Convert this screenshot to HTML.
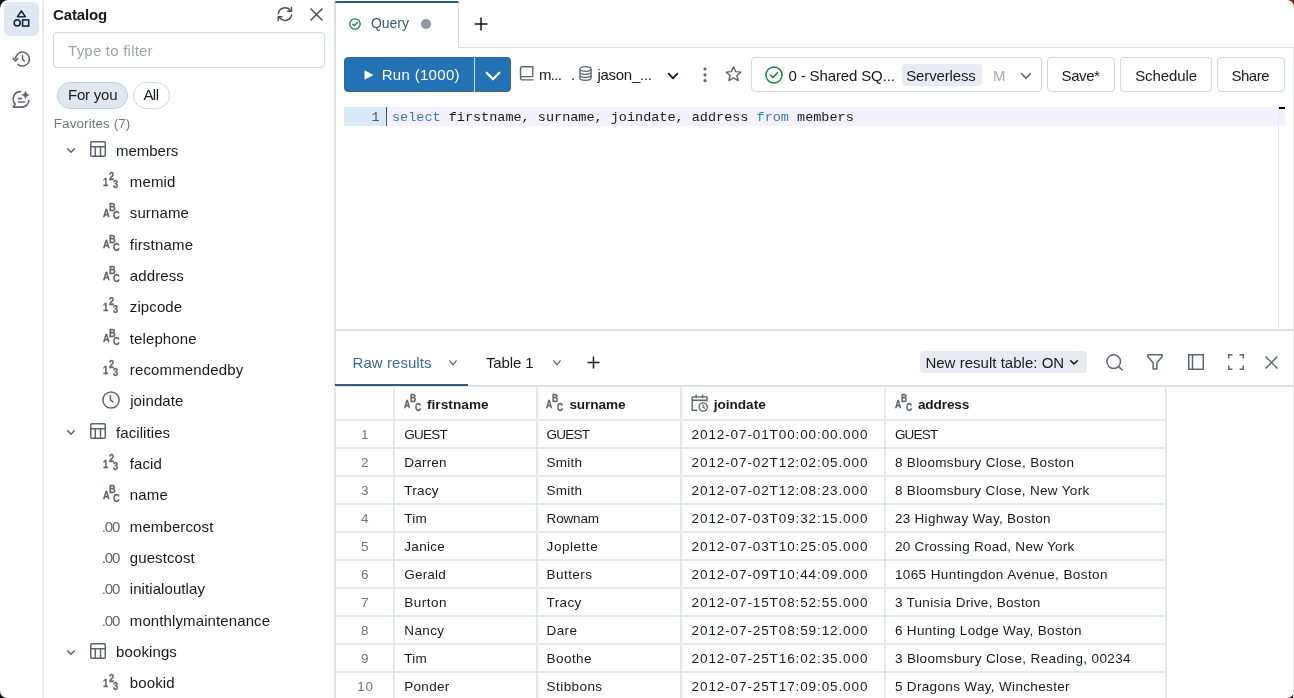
<!DOCTYPE html>
<html><head><meta charset="utf-8">
<style>
*{box-sizing:border-box;margin:0;padding:0}
html,body{width:1294px;height:698px;overflow:hidden;background:#fff;font-family:"Liberation Sans",sans-serif;color:#161b20}
.a{position:absolute}
.t{position:absolute;white-space:nowrap;line-height:1}
body{will-change:transform}
svg{position:absolute;overflow:visible}
</style></head><body>

<div class="a" style="left:42px;top:0;width:2px;height:698px;background:#e7e8eb"></div>
<div class="a" style="left:4px;top:2px;width:35px;height:34px;border-radius:6px;background:#dde8f3"></div>
<svg style="left:13px;top:10px" width="18" height="18" viewBox="0 0 18 18"><path d="M8.4 0.9 L12.3 6.7 H4.5 Z" fill="none" stroke="#0e2a44" stroke-width="1.6" stroke-linejoin="round"/>
<circle cx="4.2" cy="12.9" r="3" fill="none" stroke="#0e2a44" stroke-width="1.6"/>
<rect x="9.6" y="9.9" width="6.1" height="6.1" fill="none" stroke="#0e2a44" stroke-width="1.6"/></svg>
<svg style="left:12px;top:48px" width="22" height="22" viewBox="0 0 22 22"><path d="M5.9 16.4 A7 7 0 1 0 3.5 10.4" fill="none" stroke="#5d666e" stroke-width="1.5" stroke-linecap="round"/>
<path d="M1.2 10.3 L3.4 13 L5.7 10.5" fill="none" stroke="#5d666e" stroke-width="1.6" stroke-linecap="round" stroke-linejoin="round"/>
<path d="M10.5 7.2 V11.4 L12.4 13" fill="none" stroke="#5d666e" stroke-width="1.5" stroke-linecap="round" stroke-linejoin="round"/></svg>
<svg style="left:10px;top:88px" width="24" height="22" viewBox="0 0 24 22"><path d="M10.4 3.6 A7.3 7.3 0 0 0 5.3 16 L3.3 19.1 H11.8 A7.2 7.2 0 0 0 18.9 12.3" fill="none" stroke="#5d666e" stroke-width="1.6" stroke-linecap="round" stroke-linejoin="round"/>
<path d="M8.3 10.6 H11.5 M8.3 14 H14.5" fill="none" stroke="#5d666e" stroke-width="1.6" stroke-linecap="round"/>
<path d="M15.5 3.1 Q16.1 6.4 19.2 7.0 Q16.1 7.6 15.5 10.8 Q14.9 7.6 11.8 7.0 Q14.9 6.4 15.5 3.1 Z" fill="#5d666e" stroke="#5d666e" stroke-width="0.5" stroke-linejoin="round"/></svg>
<svg style="left:0px;top:0px" width="9" height="9" viewBox="0 0 9 9"><path d="M0 0 H8.5 A8.5 8.5 0 0 0 0 8.5 Z" fill="#111"/></svg>
<svg style="left:1286px;top:0px" width="8" height="8" viewBox="0 0 8 8"><path d="M8 0 V7 A7 7 0 0 0 1 0 Z" fill="#7a2424"/></svg>
<svg style="left:0px;top:690px" width="8" height="8" viewBox="0 0 8 8"><path d="M0 8 H7 A7 7 0 0 1 0 1 Z" fill="#111"/></svg>
<svg style="left:1286px;top:690px" width="8" height="8" viewBox="0 0 8 8"><path d="M8 8 V1 A7 7 0 0 1 1 8 Z" fill="#3a1a1a"/></svg>
<div class="t" style="left:53.1px;top:7px;font-size:15px;color:#161b20;font-family:'Liberation Sans',sans-serif;font-weight:bold;letter-spacing:-0.146px">Catalog</div>
<svg style="left:277px;top:6px" width="16" height="16" viewBox="0 0 16 16"><path d="M1.3 7.6 A6.8 6.8 0 0 1 13.6 4.6" fill="none" stroke="#4a5258" stroke-width="1.5" stroke-linecap="round"/>
<path d="M14.6 9 A6.8 6.8 0 0 1 2.6 11.8" fill="none" stroke="#4a5258" stroke-width="1.5" stroke-linecap="round"/>
<path d="M14.5 1.6 V5.3 H10.8" fill="none" stroke="#4a5258" stroke-width="1.5" stroke-linecap="round" stroke-linejoin="round"/>
<path d="M1.3 14.4 V10.7 H5" fill="none" stroke="#4a5258" stroke-width="1.5" stroke-linecap="round" stroke-linejoin="round"/></svg>
<svg style="left:310px;top:8px" width="13" height="13" viewBox="0 0 13 13"><path d="M0.5 0.5 L12.5 12.5 M12.5 0.5 L0.5 12.5" fill="none" stroke="#4a5258" stroke-width="1.5"/></svg>
<div class="a" style="left:53px;top:32px;width:272px;height:36px;border:1px solid #d3d9df;border-radius:4px"></div>
<div class="t" style="left:68.1px;top:43px;font-size:15px;color:#9aa4ad;font-family:'Liberation Sans',sans-serif;letter-spacing:0.217px">Type to filter</div>
<div class="a" style="left:57px;top:82px;width:71px;height:26.5px;border:1px solid #bfcdda;border-radius:14px;background:#dfe8f1"></div>
<div class="t" style="left:68.0px;top:87px;font-size:15px;color:#161b20;font-family:'Liberation Sans',sans-serif;letter-spacing:-0.225px">For you</div>
<div class="a" style="left:133px;top:82px;width:37px;height:26.5px;border:1px solid #d3d9df;border-radius:14px"></div>
<div class="t" style="left:143.4px;top:87px;font-size:15px;color:#161b20;font-family:'Liberation Sans',sans-serif;letter-spacing:-0.525px">All</div>
<div class="t" style="left:53.8px;top:117px;font-size:13.5px;color:#6f7a84;font-family:'Liberation Sans',sans-serif;letter-spacing:0.066px">Favorites (7)</div>
<svg style="left:66.5px;top:147.9px" width="8" height="5" viewBox="0 0 8 5"><path d="M0.7 0.7 L4.0 4.3 L7.3 0.7" fill="none" stroke="#5d666e" stroke-width="1.5" stroke-linecap="round" stroke-linejoin="round"/></svg>
<svg style="left:90px;top:141.1px" width="16" height="16" viewBox="0 0 16 16"><rect x="0.75" y="0.75" width="14.5" height="14.5" rx="1" fill="none" stroke="#5d666e" stroke-width="1.5"/>
<path d="M0.75 5.7 H15.25 M5.3 5.7 V15.25 M10.5 5.7 V15.25" fill="none" stroke="#5d666e" stroke-width="1.5"/></svg>
<div class="t" style="left:116.1px;top:143px;font-size:15px;color:#161b20;font-family:'Liberation Sans',sans-serif;letter-spacing:-0.042px">members</div>
<div class="t" style="left:102.9px;top:177px;font-size:10.8px;color:#5d666e;font-family:'Liberation Sans',sans-serif;font-weight:bold;-webkit-text-stroke:0.3px #5d666e;transform:scaleX(0.86);transform-origin:0 0">1</div>
<div class="t" style="left:108.6px;top:171px;font-size:10.8px;color:#5d666e;font-family:'Liberation Sans',sans-serif;font-weight:bold;-webkit-text-stroke:0.3px #5d666e;transform:scaleX(0.86);transform-origin:0 0">2</div>
<div class="t" style="left:113.4px;top:179px;font-size:10.8px;color:#5d666e;font-family:'Liberation Sans',sans-serif;font-weight:bold;-webkit-text-stroke:0.3px #5d666e;transform:scaleX(0.86);transform-origin:0 0">3</div>
<div class="t" style="left:129.8px;top:174px;font-size:15px;color:#161b20;font-family:'Liberation Sans',sans-serif;letter-spacing:0.135px">memid</div>
<div class="t" style="left:102.6px;top:208px;font-size:10.8px;color:#5d666e;font-family:'Liberation Sans',sans-serif;font-weight:bold;-webkit-text-stroke:0.3px #5d666e;transform:scaleX(0.86);transform-origin:0 0">A</div>
<div class="t" style="left:108.6px;top:202px;font-size:10.8px;color:#5d666e;font-family:'Liberation Sans',sans-serif;font-weight:bold;-webkit-text-stroke:0.3px #5d666e;transform:scaleX(0.86);transform-origin:0 0">B</div>
<div class="t" style="left:113.4px;top:210px;font-size:10.8px;color:#5d666e;font-family:'Liberation Sans',sans-serif;font-weight:bold;-webkit-text-stroke:0.3px #5d666e;transform:scaleX(0.86);transform-origin:0 0">C</div>
<div class="t" style="left:129.8px;top:205px;font-size:15px;color:#161b20;font-family:'Liberation Sans',sans-serif;letter-spacing:0.117px">surname</div>
<div class="t" style="left:102.6px;top:239px;font-size:10.8px;color:#5d666e;font-family:'Liberation Sans',sans-serif;font-weight:bold;-webkit-text-stroke:0.3px #5d666e;transform:scaleX(0.86);transform-origin:0 0">A</div>
<div class="t" style="left:108.6px;top:234px;font-size:10.8px;color:#5d666e;font-family:'Liberation Sans',sans-serif;font-weight:bold;-webkit-text-stroke:0.3px #5d666e;transform:scaleX(0.86);transform-origin:0 0">B</div>
<div class="t" style="left:113.4px;top:242px;font-size:10.8px;color:#5d666e;font-family:'Liberation Sans',sans-serif;font-weight:bold;-webkit-text-stroke:0.3px #5d666e;transform:scaleX(0.86);transform-origin:0 0">C</div>
<div class="t" style="left:129.8px;top:237px;font-size:15px;color:#161b20;font-family:'Liberation Sans',sans-serif;letter-spacing:0.194px">firstname</div>
<div class="t" style="left:102.6px;top:271px;font-size:10.8px;color:#5d666e;font-family:'Liberation Sans',sans-serif;font-weight:bold;-webkit-text-stroke:0.3px #5d666e;transform:scaleX(0.86);transform-origin:0 0">A</div>
<div class="t" style="left:108.6px;top:265px;font-size:10.8px;color:#5d666e;font-family:'Liberation Sans',sans-serif;font-weight:bold;-webkit-text-stroke:0.3px #5d666e;transform:scaleX(0.86);transform-origin:0 0">B</div>
<div class="t" style="left:113.4px;top:273px;font-size:10.8px;color:#5d666e;font-family:'Liberation Sans',sans-serif;font-weight:bold;-webkit-text-stroke:0.3px #5d666e;transform:scaleX(0.86);transform-origin:0 0">C</div>
<div class="t" style="left:129.8px;top:268px;font-size:15px;color:#161b20;font-family:'Liberation Sans',sans-serif;letter-spacing:0.107px">address</div>
<div class="t" style="left:102.9px;top:302px;font-size:10.8px;color:#5d666e;font-family:'Liberation Sans',sans-serif;font-weight:bold;-webkit-text-stroke:0.3px #5d666e;transform:scaleX(0.86);transform-origin:0 0">1</div>
<div class="t" style="left:108.6px;top:296px;font-size:10.8px;color:#5d666e;font-family:'Liberation Sans',sans-serif;font-weight:bold;-webkit-text-stroke:0.3px #5d666e;transform:scaleX(0.86);transform-origin:0 0">2</div>
<div class="t" style="left:113.4px;top:304px;font-size:10.8px;color:#5d666e;font-family:'Liberation Sans',sans-serif;font-weight:bold;-webkit-text-stroke:0.3px #5d666e;transform:scaleX(0.86);transform-origin:0 0">3</div>
<div class="t" style="left:129.8px;top:299px;font-size:15px;color:#161b20;font-family:'Liberation Sans',sans-serif;letter-spacing:0.103px">zipcode</div>
<div class="t" style="left:102.6px;top:333px;font-size:10.8px;color:#5d666e;font-family:'Liberation Sans',sans-serif;font-weight:bold;-webkit-text-stroke:0.3px #5d666e;transform:scaleX(0.86);transform-origin:0 0">A</div>
<div class="t" style="left:108.6px;top:328px;font-size:10.8px;color:#5d666e;font-family:'Liberation Sans',sans-serif;font-weight:bold;-webkit-text-stroke:0.3px #5d666e;transform:scaleX(0.86);transform-origin:0 0">B</div>
<div class="t" style="left:113.4px;top:336px;font-size:10.8px;color:#5d666e;font-family:'Liberation Sans',sans-serif;font-weight:bold;-webkit-text-stroke:0.3px #5d666e;transform:scaleX(0.86);transform-origin:0 0">C</div>
<div class="t" style="left:129.8px;top:331px;font-size:15px;color:#161b20;font-family:'Liberation Sans',sans-serif;letter-spacing:0.099px">telephone</div>
<div class="t" style="left:102.9px;top:365px;font-size:10.8px;color:#5d666e;font-family:'Liberation Sans',sans-serif;font-weight:bold;-webkit-text-stroke:0.3px #5d666e;transform:scaleX(0.86);transform-origin:0 0">1</div>
<div class="t" style="left:108.6px;top:359px;font-size:10.8px;color:#5d666e;font-family:'Liberation Sans',sans-serif;font-weight:bold;-webkit-text-stroke:0.3px #5d666e;transform:scaleX(0.86);transform-origin:0 0">2</div>
<div class="t" style="left:113.4px;top:367px;font-size:10.8px;color:#5d666e;font-family:'Liberation Sans',sans-serif;font-weight:bold;-webkit-text-stroke:0.3px #5d666e;transform:scaleX(0.86);transform-origin:0 0">3</div>
<div class="t" style="left:129.8px;top:362px;font-size:15px;color:#161b20;font-family:'Liberation Sans',sans-serif;letter-spacing:0.138px">recommendedby</div>
<svg style="left:102.1px;top:390.8px" width="18" height="18" viewBox="0 0 18 18"><circle cx="9" cy="9" r="8.1" fill="none" stroke="#5d666e" stroke-width="1.5"/>
<path d="M8.4 4.6 V8.9 L10.9 10.9" fill="none" stroke="#5d666e" stroke-width="1.5" stroke-linecap="round" stroke-linejoin="round"/></svg>
<div class="t" style="left:130.18px;top:393px;font-size:15px;color:#161b20;font-family:'Liberation Sans',sans-serif;letter-spacing:0.091px">joindate</div>
<svg style="left:66.5px;top:430.1px" width="8" height="5" viewBox="0 0 8 5"><path d="M0.7 0.7 L4.0 4.3 L7.3 0.7" fill="none" stroke="#5d666e" stroke-width="1.5" stroke-linecap="round" stroke-linejoin="round"/></svg>
<svg style="left:90px;top:423.3px" width="16" height="16" viewBox="0 0 16 16"><rect x="0.75" y="0.75" width="14.5" height="14.5" rx="1" fill="none" stroke="#5d666e" stroke-width="1.5"/>
<path d="M0.75 5.7 H15.25 M5.3 5.7 V15.25 M10.5 5.7 V15.25" fill="none" stroke="#5d666e" stroke-width="1.5"/></svg>
<div class="t" style="left:116.1px;top:425px;font-size:15px;color:#161b20;font-family:'Liberation Sans',sans-serif;letter-spacing:0.071px">facilities</div>
<div class="t" style="left:102.9px;top:459px;font-size:10.8px;color:#5d666e;font-family:'Liberation Sans',sans-serif;font-weight:bold;-webkit-text-stroke:0.3px #5d666e;transform:scaleX(0.86);transform-origin:0 0">1</div>
<div class="t" style="left:108.6px;top:453px;font-size:10.8px;color:#5d666e;font-family:'Liberation Sans',sans-serif;font-weight:bold;-webkit-text-stroke:0.3px #5d666e;transform:scaleX(0.86);transform-origin:0 0">2</div>
<div class="t" style="left:113.4px;top:461px;font-size:10.8px;color:#5d666e;font-family:'Liberation Sans',sans-serif;font-weight:bold;-webkit-text-stroke:0.3px #5d666e;transform:scaleX(0.86);transform-origin:0 0">3</div>
<div class="t" style="left:129.8px;top:456px;font-size:15px;color:#161b20;font-family:'Liberation Sans',sans-serif;letter-spacing:0.095px">facid</div>
<div class="t" style="left:102.6px;top:490px;font-size:10.8px;color:#5d666e;font-family:'Liberation Sans',sans-serif;font-weight:bold;-webkit-text-stroke:0.3px #5d666e;transform:scaleX(0.86);transform-origin:0 0">A</div>
<div class="t" style="left:108.6px;top:484px;font-size:10.8px;color:#5d666e;font-family:'Liberation Sans',sans-serif;font-weight:bold;-webkit-text-stroke:0.3px #5d666e;transform:scaleX(0.86);transform-origin:0 0">B</div>
<div class="t" style="left:113.4px;top:493px;font-size:10.8px;color:#5d666e;font-family:'Liberation Sans',sans-serif;font-weight:bold;-webkit-text-stroke:0.3px #5d666e;transform:scaleX(0.86);transform-origin:0 0">C</div>
<div class="t" style="left:129.8px;top:487px;font-size:15px;color:#161b20;font-family:'Liberation Sans',sans-serif;letter-spacing:0.150px">name</div>
<div class="t" style="left:101.8px;top:519px;font-size:15px;color:#5d666e;font-family:'Liberation Sans',sans-serif;letter-spacing:-1.125px">.00</div>
<div class="t" style="left:129.8px;top:519px;font-size:15px;color:#161b20;font-family:'Liberation Sans',sans-serif;letter-spacing:0.110px">membercost</div>
<div class="t" style="left:101.8px;top:550px;font-size:15px;color:#5d666e;font-family:'Liberation Sans',sans-serif;letter-spacing:-1.125px">.00</div>
<div class="t" style="left:129.8px;top:550px;font-size:15px;color:#161b20;font-family:'Liberation Sans',sans-serif;letter-spacing:0.096px">guestcost</div>
<div class="t" style="left:101.8px;top:581px;font-size:15px;color:#5d666e;font-family:'Liberation Sans',sans-serif;letter-spacing:-1.125px">.00</div>
<div class="t" style="left:129.8px;top:581px;font-size:15px;color:#161b20;font-family:'Liberation Sans',sans-serif;letter-spacing:0.074px">initialoutlay</div>
<div class="t" style="left:101.8px;top:613px;font-size:15px;color:#5d666e;font-family:'Liberation Sans',sans-serif;letter-spacing:-1.125px">.00</div>
<div class="t" style="left:129.8px;top:613px;font-size:15px;color:#161b20;font-family:'Liberation Sans',sans-serif;letter-spacing:0.109px">monthlymaintenance</div>
<svg style="left:66.5px;top:649.5px" width="8" height="5" viewBox="0 0 8 5"><path d="M0.7 0.7 L4.0 4.3 L7.3 0.7" fill="none" stroke="#5d666e" stroke-width="1.5" stroke-linecap="round" stroke-linejoin="round"/></svg>
<svg style="left:90px;top:642.7px" width="16" height="16" viewBox="0 0 16 16"><rect x="0.75" y="0.75" width="14.5" height="14.5" rx="1" fill="none" stroke="#5d666e" stroke-width="1.5"/>
<path d="M0.75 5.7 H15.25 M5.3 5.7 V15.25 M10.5 5.7 V15.25" fill="none" stroke="#5d666e" stroke-width="1.5"/></svg>
<div class="t" style="left:116.1px;top:644px;font-size:15px;color:#161b20;font-family:'Liberation Sans',sans-serif;letter-spacing:0.103px">bookings</div>
<div class="t" style="left:102.9px;top:678px;font-size:10.8px;color:#5d666e;font-family:'Liberation Sans',sans-serif;font-weight:bold;-webkit-text-stroke:0.3px #5d666e;transform:scaleX(0.86);transform-origin:0 0">1</div>
<div class="t" style="left:108.6px;top:673px;font-size:10.8px;color:#5d666e;font-family:'Liberation Sans',sans-serif;font-weight:bold;-webkit-text-stroke:0.3px #5d666e;transform:scaleX(0.86);transform-origin:0 0">2</div>
<div class="t" style="left:113.4px;top:681px;font-size:10.8px;color:#5d666e;font-family:'Liberation Sans',sans-serif;font-weight:bold;-webkit-text-stroke:0.3px #5d666e;transform:scaleX(0.86);transform-origin:0 0">3</div>
<div class="t" style="left:129.8px;top:675px;font-size:15px;color:#161b20;font-family:'Liberation Sans',sans-serif;letter-spacing:0.106px">bookid</div>
<div class="a" style="left:334px;top:0;width:2px;height:698px;background:#e2e5e8"></div>
<div class="a" style="left:458px;top:47px;width:836px;height:1px;background:#d9dde1"></div>
<div class="a" style="left:335px;top:1px;width:124px;height:47px;border:1px solid #d9dde1;border-bottom:none;border-radius:5px 5px 0 0;background:#fff"></div>
<div class="a" style="left:335px;top:1px;width:124px;height:2px;background:#2a5a86;border-radius:5px 5px 0 0"></div>
<svg style="left:349px;top:18px" width="12" height="12" viewBox="0 0 12 12"><circle cx="6" cy="6" r="5.2" fill="none" stroke="#277c43" stroke-width="1.3"/>
<path d="M3.6 6.2 L5.3 7.8 L8.4 4.5" fill="none" stroke="#277c43" stroke-width="1.3" stroke-linecap="round" stroke-linejoin="round"/></svg>
<div class="t" style="left:371.0px;top:16px;font-size:14px;color:#3c5a74;font-family:'Liberation Sans',sans-serif;letter-spacing:-0.038px">Query</div>
<div class="a" style="left:421px;top:19px;width:10px;height:10px;border-radius:5px;background:#8d979f"></div>
<svg style="left:474px;top:17px" width="14" height="14" viewBox="0 0 14 14"><path d="M7 0.5 V13.5 M0.5 7 H13.5" fill="none" stroke="#161b20" stroke-width="1.5"/></svg>
<div class="a" style="left:344px;top:57px;width:167px;height:35px;border-radius:4px;background:#2272b4;border:1px solid #3d6583"></div>
<div class="a" style="left:474px;top:57px;width:1px;height:35px;background:#cfe0ee"></div>
<svg style="left:364px;top:70px" width="10" height="10" viewBox="0 0 10 10"><path d="M0.5 0.3 L9.6 5 L0.5 9.7 Z" fill="#fff"/></svg>
<div class="t" style="left:381.7px;top:67px;font-size:15px;color:#fff;font-family:'Liberation Sans',sans-serif;letter-spacing:0.314px">Run (1000)</div>
<svg style="left:486px;top:72px" width="14" height="8" viewBox="0 0 14 8"><path d="M0.7 0.7 L7.0 7.3 L13.3 0.7" fill="none" stroke="#fff" stroke-width="2.2" stroke-linecap="round" stroke-linejoin="round"/></svg>
<svg style="left:519px;top:66px" width="16" height="15" viewBox="0 0 16 15"><path d="M1.5 12 V2.3 A1.6 1.6 0 0 1 3.1 0.7 H13.8 V10.6 H3 A1.6 1.6 0 0 0 1.5 12 A1.7 1.7 0 0 0 3.2 13.9 H14.5" fill="none" stroke="#5d666e" stroke-width="1.4" stroke-linejoin="round"/></svg>
<div class="t" style="left:539.0px;top:67px;font-size:15px;color:#161b20;font-family:'Liberation Sans',sans-serif;letter-spacing:-0.658px">m...</div>
<div class="t" style="left:571.0px;top:67px;font-size:15px;color:#161b20;font-family:'Liberation Sans',sans-serif">.</div>
<svg style="left:579px;top:65.5px" width="13" height="15" viewBox="0 0 13 15"><ellipse cx="6.5" cy="3" rx="5.6" ry="2.3" fill="none" stroke="#5d666e" stroke-width="1.3"/>
<path d="M0.9 3 V12 A5.6 2.3 0 0 0 12.1 12 V3 M0.9 6 A5.6 2.3 0 0 0 12.1 6 M0.9 9 A5.6 2.3 0 0 0 12.1 9" fill="none" stroke="#5d666e" stroke-width="1.3"/></svg>
<div class="t" style="left:597.38px;top:67px;font-size:15px;color:#161b20;font-family:'Liberation Sans',sans-serif;letter-spacing:-0.259px">jason_...</div>
<svg style="left:668px;top:72.5px" width="10" height="6" viewBox="0 0 10 6"><path d="M0.7 0.7 L5.0 5.3 L9.3 0.7" fill="none" stroke="#161b20" stroke-width="1.8" stroke-linecap="round" stroke-linejoin="round"/></svg>
<svg style="left:702px;top:67px" width="6" height="16" viewBox="0 0 6 16"><circle cx="3" cy="2" r="1.6" fill="#5d666e"/><circle cx="3" cy="7.8" r="1.6" fill="#5d666e"/><circle cx="3" cy="13.6" r="1.6" fill="#5d666e"/></svg>
<svg style="left:725px;top:66px" width="17" height="16" viewBox="0 0 17 16"><path d="M8.5 0.9 L10.7 5.6 L15.8 6.1 L11.9 9.5 L13.1 14.6 L8.5 11.9 L3.9 14.6 L5.1 9.5 L1.2 6.1 L6.3 5.6 Z" fill="none" stroke="#5d666e" stroke-width="1.4" stroke-linejoin="round"/></svg>
<div class="a" style="left:751px;top:57px;width:291px;height:35px;border:1px solid #d3d9df;border-radius:4px"></div>
<svg style="left:765px;top:66px" width="18" height="18" viewBox="0 0 18 18"><circle cx="9" cy="9" r="8" fill="none" stroke="#277c43" stroke-width="1.5"/>
<path d="M5.5 9.2 L8 11.6 L12.6 6.6" fill="none" stroke="#277c43" stroke-width="1.5" stroke-linecap="round" stroke-linejoin="round"/></svg>
<div class="t" style="left:788.4px;top:68px;font-size:15px;color:#161b20;font-family:'Liberation Sans',sans-serif;letter-spacing:-0.125px">0 - Shared SQ...</div>
<div class="a" style="left:901.5px;top:64px;width:80px;height:22px;border-radius:4px;background:#e8ecf0"></div>
<div class="t" style="left:906.2px;top:68px;font-size:15px;color:#161b20;font-family:'Liberation Sans',sans-serif;letter-spacing:-0.131px">Serverless</div>
<div class="t" style="left:993.0px;top:68px;font-size:15px;color:#a3acb4;font-family:'Liberation Sans',sans-serif">M</div>
<svg style="left:1020.5px;top:72.8px" width="10" height="6" viewBox="0 0 10 6"><path d="M0.7 0.7 L5.0 5.3 L9.3 0.7" fill="none" stroke="#5d666e" stroke-width="1.6" stroke-linecap="round" stroke-linejoin="round"/></svg>
<div class="a" style="left:1047px;top:57px;width:68px;height:35px;border:1px solid #d3d9df;border-radius:4px"></div>
<div class="t" style="left:1061.6px;top:68px;font-size:15px;color:#161b20;font-family:'Liberation Sans',sans-serif;letter-spacing:-0.438px">Save*</div>
<div class="a" style="left:1120px;top:57px;width:92px;height:35px;border:1px solid #d3d9df;border-radius:4px"></div>
<div class="t" style="left:1135.2px;top:68px;font-size:15px;color:#161b20;font-family:'Liberation Sans',sans-serif;letter-spacing:-0.107px">Schedule</div>
<div class="a" style="left:1217px;top:57px;width:68px;height:35px;border:1px solid #d3d9df;border-radius:4px"></div>
<div class="t" style="left:1231.4px;top:68px;font-size:15px;color:#161b20;font-family:'Liberation Sans',sans-serif;letter-spacing:-0.438px">Share</div>
<div class="a" style="left:344px;top:107px;width:42px;height:19px;background:#d8eaf8"></div>
<div class="a" style="left:386px;top:107px;width:892px;height:19px;background:#f3f2fb"></div>
<div class="a" style="left:1279px;top:110px;width:6px;height:15px;background:#f3f2fb"></div>
<div class="a" style="left:386px;top:107px;width:1.3px;height:19px;background:#2f5d86"></div>
<div class="t" style="left:371.5px;top:111px;font-size:13.5px;color:#45586a;font-family:'Liberation Mono',monospace">1</div>
<div class="t" style="left:392px;top:111px;font-size:13.5px;color:#161b20;font-family:'Liberation Mono',monospace"><span style="color:#3b7bb3">select</span> firstname, surname, joindate, address <span style="color:#3b7bb3">from</span> members</div>
<div class="a" style="left:1278px;top:108px;width:1px;height:222px;background:#e6e9ec"></div>
<div class="a" style="left:1279px;top:106.5px;width:6px;height:2px;background:#000"></div>
<div class="a" style="left:1293px;top:48px;width:1px;height:650px;background:#eceef0"></div>
<div class="a" style="left:335px;top:329px;width:959px;height:2px;background:#e1e4e7"></div>
<div class="t" style="left:352.6px;top:355px;font-size:15px;color:#3d6a93;font-family:'Liberation Sans',sans-serif;letter-spacing:0.053px">Raw results</div>
<svg style="left:449px;top:360px" width="8" height="5.6" viewBox="0 0 8 5.6"><path d="M0.7 0.7 L4.0 4.8999999999999995 L7.3 0.7" fill="none" stroke="#5d666e" stroke-width="1.3" stroke-linecap="round" stroke-linejoin="round"/></svg>
<div class="t" style="left:485.9px;top:355px;font-size:15px;color:#161b20;font-family:'Liberation Sans',sans-serif;letter-spacing:-0.096px">Table 1</div>
<svg style="left:552.5px;top:360px" width="8" height="5.6" viewBox="0 0 8 5.6"><path d="M0.7 0.7 L4.0 4.8999999999999995 L7.3 0.7" fill="none" stroke="#5d666e" stroke-width="1.3" stroke-linecap="round" stroke-linejoin="round"/></svg>
<svg style="left:587px;top:355.5px" width="13" height="13" viewBox="0 0 13 13"><path d="M6.5 0.5 V12.5 M0.5 6.5 H12.5" fill="none" stroke="#161b20" stroke-width="1.5"/></svg>
<div class="a" style="left:920px;top:351px;width:167px;height:22px;border-radius:4px;background:#e8ecf0"></div>
<div class="t" style="left:925.4px;top:355px;font-size:15px;color:#161b20;font-family:'Liberation Sans',sans-serif;letter-spacing:0.022px">New result table: ON</div>
<svg style="left:1070px;top:359.8px" width="8" height="4.6" viewBox="0 0 8 4.6"><path d="M0.7 0.7 L4.0 3.8999999999999995 L7.3 0.7" fill="none" stroke="#161b20" stroke-width="1.6" stroke-linecap="round" stroke-linejoin="round"/></svg>
<svg style="left:1106px;top:354px" width="18" height="17" viewBox="0 0 18 17"><circle cx="7.7" cy="7.6" r="6.8" fill="none" stroke="#5d666e" stroke-width="1.5"/><path d="M12.6 12.6 L16.6 16.3" fill="none" stroke="#5d666e" stroke-width="1.5"/></svg>
<svg style="left:1147px;top:354px" width="16" height="16" viewBox="0 0 16 16"><path d="M0.8 0.8 H15.2 V2.4 L9.9 8.8 V15 H6.1 V8.8 L0.8 2.4 Z" fill="none" stroke="#5d666e" stroke-width="1.5" stroke-linejoin="round"/></svg>
<svg style="left:1187.5px;top:354px" width="16" height="16" viewBox="0 0 16 16"><rect x="0.75" y="0.75" width="14.5" height="14.5" fill="none" stroke="#5d666e" stroke-width="1.5"/><path d="M4.5 0.75 V15.25" stroke="#5d666e" stroke-width="1.5"/></svg>
<svg style="left:1227.5px;top:354px" width="16" height="16" viewBox="0 0 16 16"><path d="M0.75 4.5 V0.75 H4.5 M11.5 0.75 H15.25 V4.5 M15.25 11.5 V15.25 H11.5 M4.5 15.25 H0.75 V11.5" fill="none" stroke="#5d666e" stroke-width="1.5"/></svg>
<svg style="left:1265px;top:355.5px" width="13" height="13" viewBox="0 0 13 13"><path d="M0.5 0.5 L12.5 12.5 M12.5 0.5 L0.5 12.5" fill="none" stroke="#5d666e" stroke-width="1.5"/></svg>
<div class="a" style="left:335px;top:385px;width:959px;height:1.5px;background:#dde1e5"></div>
<div class="a" style="left:335px;top:383.5px;width:133px;height:2.5px;background:#37597a"></div>
<div class="a" style="left:393px;top:386px;width:2px;height:312px;background:#e6e9ec"></div>
<div class="a" style="left:536px;top:386px;width:2px;height:312px;background:#e6e9ec"></div>
<div class="a" style="left:680px;top:386px;width:2px;height:312px;background:#e6e9ec"></div>
<div class="a" style="left:884px;top:386px;width:2px;height:312px;background:#e6e9ec"></div>
<div class="a" style="left:1165px;top:386px;width:2px;height:312px;background:#e6e9ec"></div>
<div class="a" style="left:335px;top:386px;width:1px;height:312px;background:#dfe3e7"></div>
<div class="t" style="left:403.7px;top:400px;font-size:10px;color:#5d666e;font-family:'Liberation Sans',sans-serif;font-weight:bold;-webkit-text-stroke:0.3px #5d666e;transform:scaleX(0.86);transform-origin:0 0">A</div>
<div class="t" style="left:409.7px;top:394px;font-size:10px;color:#5d666e;font-family:'Liberation Sans',sans-serif;font-weight:bold;-webkit-text-stroke:0.3px #5d666e;transform:scaleX(0.86);transform-origin:0 0">B</div>
<div class="t" style="left:414.5px;top:403px;font-size:10px;color:#5d666e;font-family:'Liberation Sans',sans-serif;font-weight:bold;-webkit-text-stroke:0.3px #5d666e;transform:scaleX(0.86);transform-origin:0 0">C</div>
<div class="t" style="left:426.9px;top:398px;font-size:13.6px;color:#161b20;font-family:'Liberation Sans',sans-serif;font-weight:bold;letter-spacing:0.075px">firstname</div>
<div class="t" style="left:546.0px;top:400px;font-size:10px;color:#5d666e;font-family:'Liberation Sans',sans-serif;font-weight:bold;-webkit-text-stroke:0.3px #5d666e;transform:scaleX(0.86);transform-origin:0 0">A</div>
<div class="t" style="left:552.0px;top:394px;font-size:10px;color:#5d666e;font-family:'Liberation Sans',sans-serif;font-weight:bold;-webkit-text-stroke:0.3px #5d666e;transform:scaleX(0.86);transform-origin:0 0">B</div>
<div class="t" style="left:556.8px;top:403px;font-size:10px;color:#5d666e;font-family:'Liberation Sans',sans-serif;font-weight:bold;-webkit-text-stroke:0.3px #5d666e;transform:scaleX(0.86);transform-origin:0 0">C</div>
<div class="t" style="left:569.4px;top:398px;font-size:13.6px;color:#161b20;font-family:'Liberation Sans',sans-serif;font-weight:bold;letter-spacing:-0.102px">surname</div>
<svg style="left:691px;top:394px" width="18" height="18" viewBox="0 0 18 18"><path d="M6.3 16.3 H1.2 V2.9 H16 V7.5 M1.2 6.3 H16 M5.1 0.4 V4.2 M11.5 0.4 V4.2" fill="none" stroke="#5d666e" stroke-width="1.4"/>
<circle cx="12.2" cy="13" r="4.1" fill="none" stroke="#5d666e" stroke-width="1.4"/>
<path d="M12 10.9 V13.1 L13.6 14.2" fill="none" stroke="#5d666e" stroke-width="1.2" stroke-linecap="round"/></svg>
<div class="t" style="left:713.67px;top:398px;font-size:13.6px;color:#161b20;font-family:'Liberation Sans',sans-serif;font-weight:bold">joindate</div>
<div class="t" style="left:894.9px;top:400px;font-size:10px;color:#5d666e;font-family:'Liberation Sans',sans-serif;font-weight:bold;-webkit-text-stroke:0.3px #5d666e;transform:scaleX(0.86);transform-origin:0 0">A</div>
<div class="t" style="left:900.9px;top:394px;font-size:10px;color:#5d666e;font-family:'Liberation Sans',sans-serif;font-weight:bold;-webkit-text-stroke:0.3px #5d666e;transform:scaleX(0.86);transform-origin:0 0">B</div>
<div class="t" style="left:905.7px;top:403px;font-size:10px;color:#5d666e;font-family:'Liberation Sans',sans-serif;font-weight:bold;-webkit-text-stroke:0.3px #5d666e;transform:scaleX(0.86);transform-origin:0 0">C</div>
<div class="t" style="left:917.9px;top:398px;font-size:13.6px;color:#161b20;font-family:'Liberation Sans',sans-serif;font-weight:bold;letter-spacing:-0.109px">address</div>
<div class="a" style="left:335px;top:419px;width:832px;height:2px;background:#e6e9ec"></div>
<div class="a" style="left:335px;top:447px;width:832px;height:2px;background:#e6e9ec"></div>
<div class="t" style="left:361.07px;top:428px;font-size:13.5px;color:#6b767f;font-family:'Liberation Sans',sans-serif">1</div>
<div class="t" style="left:404.3px;top:428px;font-size:13.5px;color:#161b20;font-family:'Liberation Sans',sans-serif;letter-spacing:-0.777px">GUEST</div>
<div class="t" style="left:546.6px;top:428px;font-size:13.5px;color:#161b20;font-family:'Liberation Sans',sans-serif;letter-spacing:-0.777px">GUEST</div>
<div class="t" style="left:691.6px;top:428px;font-size:13.5px;color:#161b20;font-family:'Liberation Sans',sans-serif;letter-spacing:0.894px">2012-07-01T00:00:00.000</div>
<div class="t" style="left:894.9px;top:428px;font-size:13.5px;color:#161b20;font-family:'Liberation Sans',sans-serif;letter-spacing:-0.777px">GUEST</div>
<div class="a" style="left:335px;top:475px;width:832px;height:2px;background:#e6e9ec"></div>
<div class="t" style="left:361.07px;top:456px;font-size:13.5px;color:#6b767f;font-family:'Liberation Sans',sans-serif">2</div>
<div class="t" style="left:404.3px;top:456px;font-size:13.5px;color:#161b20;font-family:'Liberation Sans',sans-serif;letter-spacing:0.192px">Darren</div>
<div class="t" style="left:546.6px;top:456px;font-size:13.5px;color:#161b20;font-family:'Liberation Sans',sans-serif;letter-spacing:0.227px">Smith</div>
<div class="t" style="left:691.6px;top:456px;font-size:13.5px;color:#161b20;font-family:'Liberation Sans',sans-serif;letter-spacing:0.894px">2012-07-02T12:02:05.000</div>
<div class="t" style="left:894.9px;top:456px;font-size:13.5px;color:#161b20;font-family:'Liberation Sans',sans-serif;letter-spacing:0.349px">8 Bloomsbury Close, Boston</div>
<div class="a" style="left:335px;top:503px;width:832px;height:2px;background:#e6e9ec"></div>
<div class="t" style="left:361.07px;top:484px;font-size:13.5px;color:#6b767f;font-family:'Liberation Sans',sans-serif">3</div>
<div class="t" style="left:404.3px;top:484px;font-size:13.5px;color:#161b20;font-family:'Liberation Sans',sans-serif;letter-spacing:0.231px">Tracy</div>
<div class="t" style="left:546.6px;top:484px;font-size:13.5px;color:#161b20;font-family:'Liberation Sans',sans-serif;letter-spacing:0.227px">Smith</div>
<div class="t" style="left:691.6px;top:484px;font-size:13.5px;color:#161b20;font-family:'Liberation Sans',sans-serif;letter-spacing:0.894px">2012-07-02T12:08:23.000</div>
<div class="t" style="left:894.9px;top:484px;font-size:13.5px;color:#161b20;font-family:'Liberation Sans',sans-serif;letter-spacing:0.336px">8 Bloomsbury Close, New York</div>
<div class="a" style="left:335px;top:531px;width:832px;height:2px;background:#e6e9ec"></div>
<div class="t" style="left:361.07px;top:512px;font-size:13.5px;color:#6b767f;font-family:'Liberation Sans',sans-serif">4</div>
<div class="t" style="left:404.3px;top:512px;font-size:13.5px;color:#161b20;font-family:'Liberation Sans',sans-serif;letter-spacing:0.197px">Tim</div>
<div class="t" style="left:546.6px;top:512px;font-size:13.5px;color:#161b20;font-family:'Liberation Sans',sans-serif;letter-spacing:-0.172px">Rownam</div>
<div class="t" style="left:691.6px;top:512px;font-size:13.5px;color:#161b20;font-family:'Liberation Sans',sans-serif;letter-spacing:0.894px">2012-07-03T09:32:15.000</div>
<div class="t" style="left:894.9px;top:512px;font-size:13.5px;color:#161b20;font-family:'Liberation Sans',sans-serif;letter-spacing:0.304px">23 Highway Way, Boston</div>
<div class="a" style="left:335px;top:559px;width:832px;height:2px;background:#e6e9ec"></div>
<div class="t" style="left:361.07px;top:540px;font-size:13.5px;color:#6b767f;font-family:'Liberation Sans',sans-serif">5</div>
<div class="t" style="left:404.3px;top:540px;font-size:13.5px;color:#161b20;font-family:'Liberation Sans',sans-serif;letter-spacing:0.297px">Janice</div>
<div class="t" style="left:546.6px;top:540px;font-size:13.5px;color:#161b20;font-family:'Liberation Sans',sans-serif;letter-spacing:0.540px">Joplette</div>
<div class="t" style="left:691.6px;top:540px;font-size:13.5px;color:#161b20;font-family:'Liberation Sans',sans-serif;letter-spacing:0.894px">2012-07-03T10:25:05.000</div>
<div class="t" style="left:894.9px;top:540px;font-size:13.5px;color:#161b20;font-family:'Liberation Sans',sans-serif;letter-spacing:0.273px">20 Crossing Road, New York</div>
<div class="a" style="left:335px;top:587px;width:832px;height:2px;background:#e6e9ec"></div>
<div class="t" style="left:361.07px;top:568px;font-size:13.5px;color:#6b767f;font-family:'Liberation Sans',sans-serif">6</div>
<div class="t" style="left:404.3px;top:568px;font-size:13.5px;color:#161b20;font-family:'Liberation Sans',sans-serif;letter-spacing:0.180px">Gerald</div>
<div class="t" style="left:546.6px;top:568px;font-size:13.5px;color:#161b20;font-family:'Liberation Sans',sans-serif;letter-spacing:0.434px">Butters</div>
<div class="t" style="left:691.6px;top:568px;font-size:13.5px;color:#161b20;font-family:'Liberation Sans',sans-serif;letter-spacing:0.894px">2012-07-09T10:44:09.000</div>
<div class="t" style="left:894.9px;top:568px;font-size:13.5px;color:#161b20;font-family:'Liberation Sans',sans-serif;letter-spacing:0.402px">1065 Huntingdon Avenue, Boston</div>
<div class="a" style="left:335px;top:615px;width:832px;height:2px;background:#e6e9ec"></div>
<div class="t" style="left:361.07px;top:596px;font-size:13.5px;color:#6b767f;font-family:'Liberation Sans',sans-serif">7</div>
<div class="t" style="left:404.3px;top:596px;font-size:13.5px;color:#161b20;font-family:'Liberation Sans',sans-serif;letter-spacing:0.508px">Burton</div>
<div class="t" style="left:546.6px;top:596px;font-size:13.5px;color:#161b20;font-family:'Liberation Sans',sans-serif;letter-spacing:0.381px">Tracy</div>
<div class="t" style="left:691.6px;top:596px;font-size:13.5px;color:#161b20;font-family:'Liberation Sans',sans-serif;letter-spacing:0.894px">2012-07-15T08:52:55.000</div>
<div class="t" style="left:894.9px;top:596px;font-size:13.5px;color:#161b20;font-family:'Liberation Sans',sans-serif;letter-spacing:0.298px">3 Tunisia Drive, Boston</div>
<div class="a" style="left:335px;top:643px;width:832px;height:2px;background:#e6e9ec"></div>
<div class="t" style="left:361.07px;top:624px;font-size:13.5px;color:#6b767f;font-family:'Liberation Sans',sans-serif">8</div>
<div class="t" style="left:404.3px;top:624px;font-size:13.5px;color:#161b20;font-family:'Liberation Sans',sans-serif;letter-spacing:0.357px">Nancy</div>
<div class="t" style="left:546.6px;top:624px;font-size:13.5px;color:#161b20;font-family:'Liberation Sans',sans-serif;letter-spacing:0.368px">Dare</div>
<div class="t" style="left:691.6px;top:624px;font-size:13.5px;color:#161b20;font-family:'Liberation Sans',sans-serif;letter-spacing:0.894px">2012-07-25T08:59:12.000</div>
<div class="t" style="left:894.9px;top:624px;font-size:13.5px;color:#161b20;font-family:'Liberation Sans',sans-serif;letter-spacing:0.336px">6 Hunting Lodge Way, Boston</div>
<div class="a" style="left:335px;top:671px;width:832px;height:2px;background:#e6e9ec"></div>
<div class="t" style="left:361.07px;top:652px;font-size:13.5px;color:#6b767f;font-family:'Liberation Sans',sans-serif">9</div>
<div class="t" style="left:404.3px;top:652px;font-size:13.5px;color:#161b20;font-family:'Liberation Sans',sans-serif;letter-spacing:0.197px">Tim</div>
<div class="t" style="left:546.6px;top:652px;font-size:13.5px;color:#161b20;font-family:'Liberation Sans',sans-serif;letter-spacing:0.421px">Boothe</div>
<div class="t" style="left:691.6px;top:652px;font-size:13.5px;color:#161b20;font-family:'Liberation Sans',sans-serif;letter-spacing:0.894px">2012-07-25T16:02:35.000</div>
<div class="t" style="left:894.9px;top:652px;font-size:13.5px;color:#161b20;font-family:'Liberation Sans',sans-serif;letter-spacing:0.366px">3 Bloomsbury Close, Reading, 00234</div>
<div class="a" style="left:335px;top:699px;width:832px;height:2px;background:#e6e9ec"></div>
<div class="t" style="left:357.13px;top:680px;font-size:13.5px;color:#6b767f;font-family:'Liberation Sans',sans-serif;letter-spacing:0.749px">10</div>
<div class="t" style="left:404.3px;top:680px;font-size:13.5px;color:#161b20;font-family:'Liberation Sans',sans-serif;letter-spacing:0.272px">Ponder</div>
<div class="t" style="left:546.6px;top:680px;font-size:13.5px;color:#161b20;font-family:'Liberation Sans',sans-serif;letter-spacing:0.426px">Stibbons</div>
<div class="t" style="left:691.6px;top:680px;font-size:13.5px;color:#161b20;font-family:'Liberation Sans',sans-serif;letter-spacing:0.894px">2012-07-25T17:09:05.000</div>
<div class="t" style="left:894.9px;top:680px;font-size:13.5px;color:#161b20;font-family:'Liberation Sans',sans-serif;letter-spacing:0.338px">5 Dragons Way, Winchester</div>
</body></html>
